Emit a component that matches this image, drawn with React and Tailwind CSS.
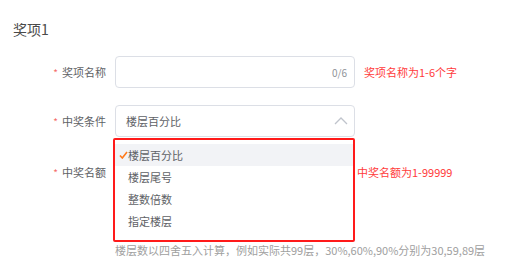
import React from 'react';

const options = ['楼层百分比', '楼层尾号', '整数倍数', '指定楼层'];

const Label = ({ children }) => (
  <div className="w-[106px] shrink-0 flex items-center justify-end text-[11px] text-[#606266]">
    <span className="text-[#f56c6c] mr-[4px] text-[10px]">*</span>
    <span>{children}</span>
  </div>
);

export default function App() {
  const selected = 0;

  return (
    <div
      className="w-[511px] h-[278px] bg-white overflow-hidden"
      style={{ fontFamily: '"Noto Sans CJK SC", "Noto Sans", sans-serif' }}
    >
      <div className="pt-[19px] pl-[13px] text-[14px] leading-[20px] text-[#4a4a4a]">奖项1</div>

      {/* 奖项名称 */}
      <div className="flex items-center mt-[17px] h-[32px]">
        <Label>奖项名称</Label>
        <div className="ml-[9px] w-[240px] h-[32px] border border-[#dcdfe6] rounded-[4px] flex items-center justify-end pr-[7px]">
          <span className="text-[10px] text-[#909399]">0/6</span>
        </div>
        <span className="ml-[9px] text-[11px] text-[#ff3b3b]">奖项名称为1-6个字</span>
      </div>

      {/* 中奖条件 */}
      <div className="flex items-center mt-[17px] h-[32px]">
        <Label>中奖条件</Label>
        <div className="relative ml-[9px] w-[240px] h-[32px]">
          <div className="h-full border border-[#dcdfe6] rounded-[4px] flex items-center justify-between pl-[10px] pr-[6px]">
            <span className="text-[11px] text-[#606266]">楼层百分比</span>
            <svg width="14" height="8" viewBox="0 0 14 8" fill="none">
              <polyline points="1,7 7,1 13,7" stroke="#c0c4cc" strokeWidth="1.3" />
            </svg>
          </div>

          {/* dropdown */}
          <div className="absolute left-[-2px] top-[33px] w-[242px] z-10 bg-white border-2 border-[#ff1a1a] rounded-[2px] pt-[4px] pb-[8px]">
            {options.map((o, i) => (
              <div
                key={o}
                className={`relative h-[22px] flex items-center pl-[13px] text-[11px] text-[#606266] ${
                  i === selected ? 'bg-[#f2f3f6]' : ''
                }`}
              >
                {i === selected && (
                  <svg className="absolute left-[4px] top-[7px]" width="9" height="8" viewBox="0 0 9 8" fill="none">
                    <polyline points="1,4.5 3.3,7 8,1" stroke="#ff7a1a" strokeWidth="1.6" />
                  </svg>
                )}
                <span>{o}</span>
              </div>
            ))}
          </div>
        </div>
      </div>

      {/* 中奖名额 */}
      <div className="flex items-center mt-[19px] h-[32px]">
        <Label>中奖名额</Label>
        <div className="ml-[9px] w-[240px] h-[32px] border border-[#dcdfe6] rounded-[4px]" />
        <span className="ml-[2px] text-[11px] text-[#ff3b3b]">中奖名额为1-99999</span>
      </div>

      <div className="mt-[54px] pl-[115px] text-[11px] leading-[16px] text-[#a0a0a0] whitespace-nowrap">
        楼层数以四舍五入计算，例如实际共99层，30%,60%,90%分别为30,59,89层
      </div>
    </div>
  );
}
